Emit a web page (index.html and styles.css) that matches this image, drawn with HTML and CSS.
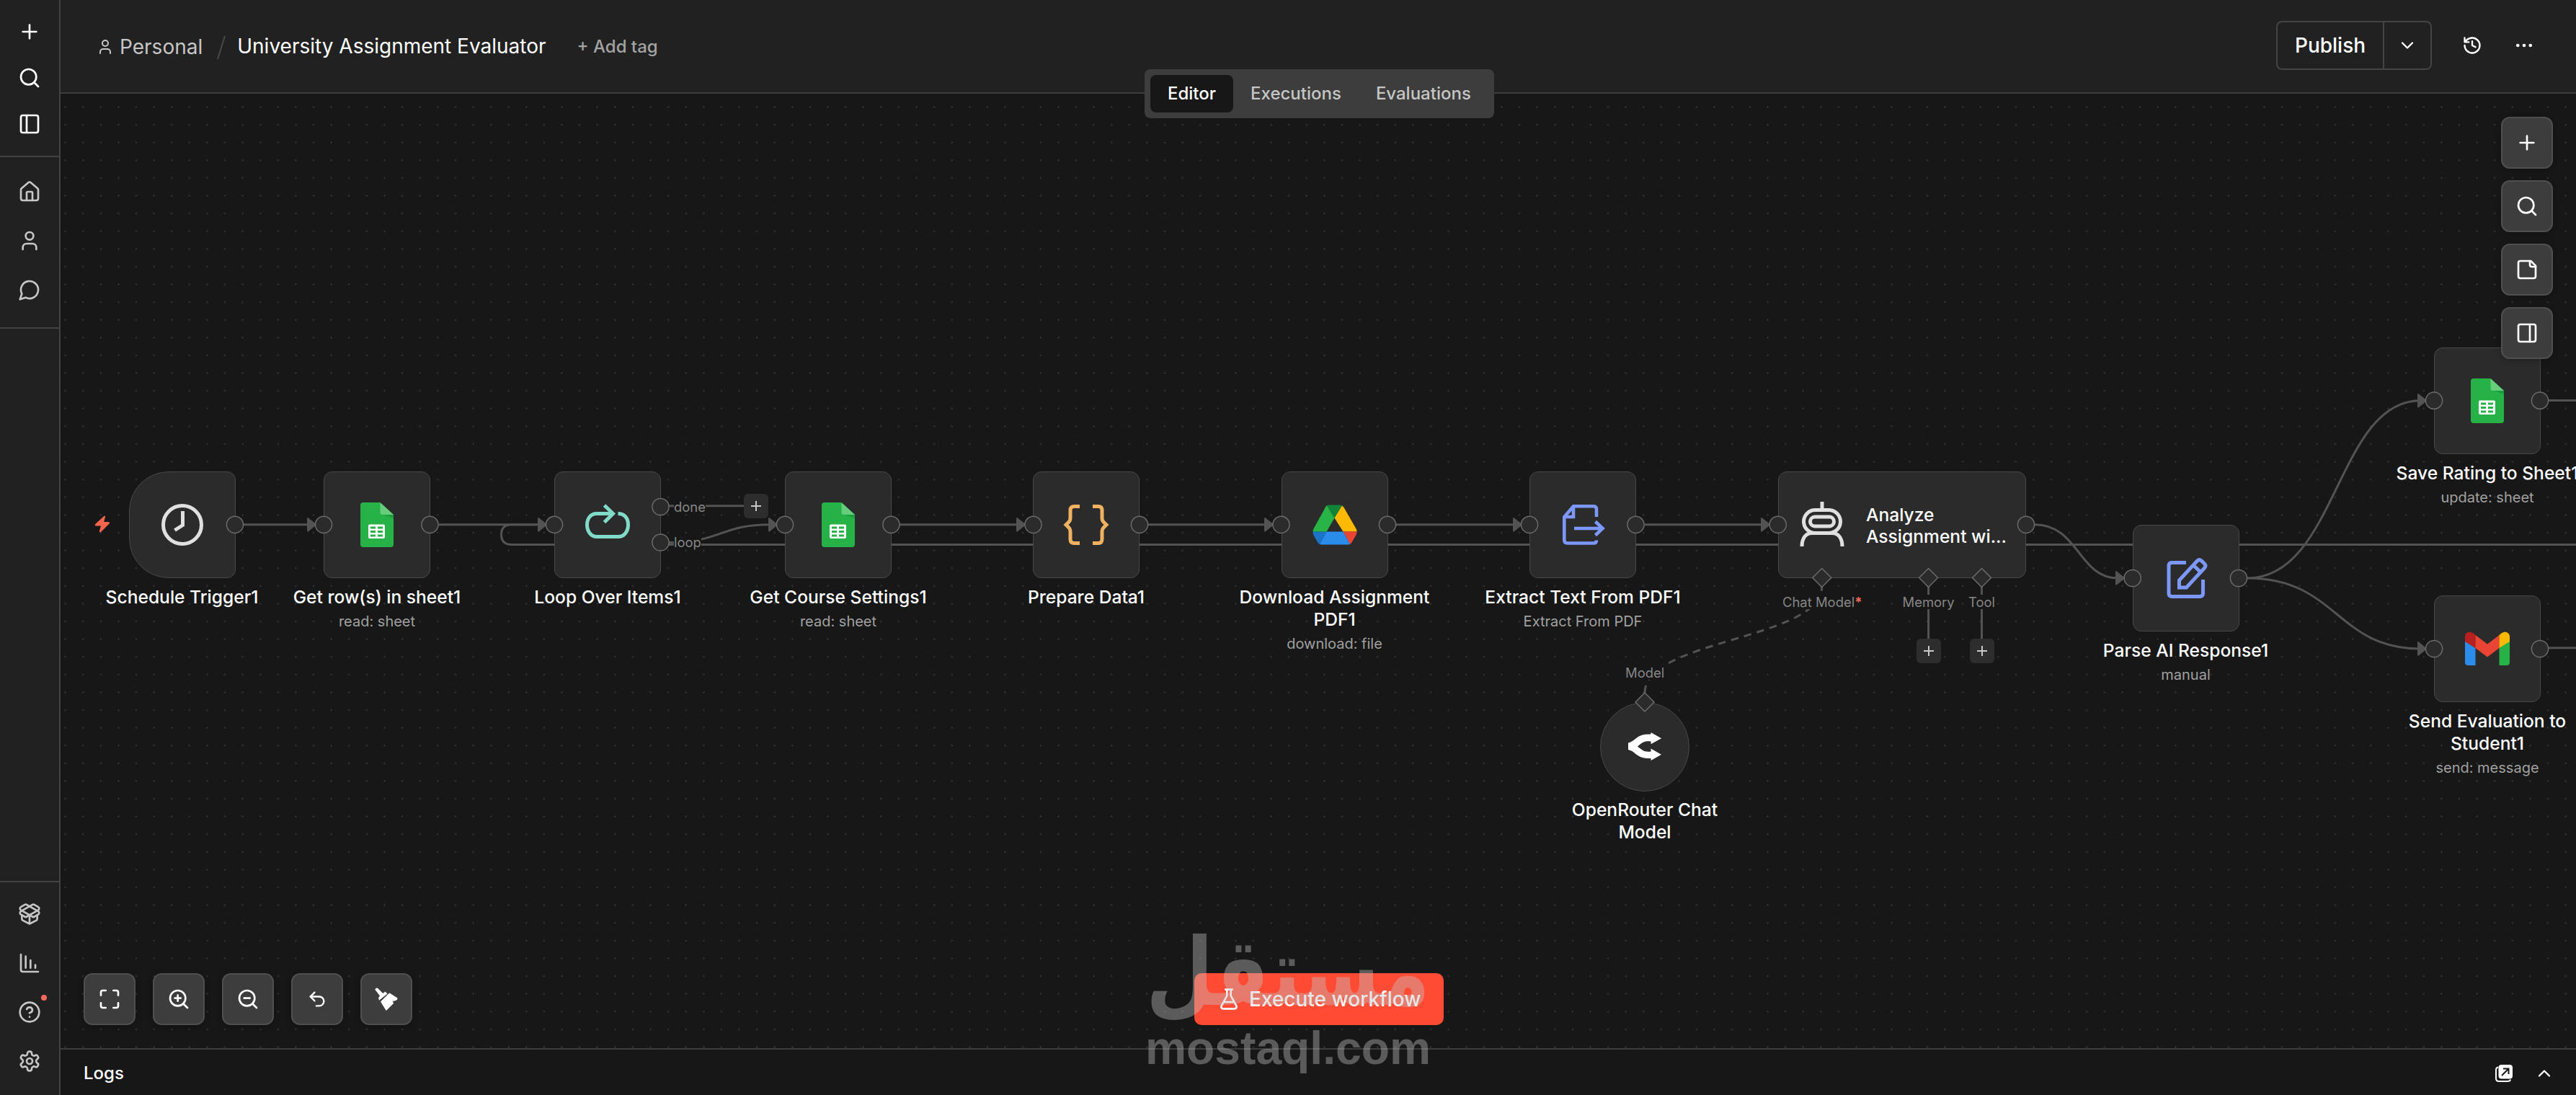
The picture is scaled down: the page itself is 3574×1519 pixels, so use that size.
FILE: index.html
```html
<!DOCTYPE html>
<html lang="en">
<head>
<meta charset="utf-8">
<title>University Assignment Evaluator</title>
<link rel="stylesheet" href="styles.css">
</head>
<body>
<svg class="defs" aria-hidden="true">
  <symbol id="plus" viewBox="0 0 24 24"><path d="M5 12h14M12 5v14"/></symbol>
  <symbol id="search" viewBox="0 0 24 24"><circle cx="11" cy="11" r="8"/><path d="m21 21-4.3-4.3"/></symbol>
  <symbol id="panel-left" viewBox="0 0 24 24"><rect x="3" y="3" width="18" height="18" rx="2"/><path d="M9 3v18"/></symbol>
  <symbol id="panel-right" viewBox="0 0 24 24"><rect x="3" y="3" width="18" height="18" rx="2"/><path d="M15 3v18"/></symbol>
  <symbol id="home" viewBox="0 0 24 24"><path d="M15 21v-8a1 1 0 0 0-1-1h-4a1 1 0 0 0-1 1v8"/><path d="M3 10a2 2 0 0 1 .709-1.528l7-5.999a2 2 0 0 1 2.582 0l7 5.999A2 2 0 0 1 21 10v9a2 2 0 0 1-2 2H5a2 2 0 0 1-2-2z"/></symbol>
  <symbol id="user" viewBox="0 0 24 24"><path d="M19 21v-2a4 4 0 0 0-4-4H9a4 4 0 0 0-4 4v2"/><circle cx="12" cy="7" r="4"/></symbol>
  <symbol id="chat" viewBox="0 0 24 24"><path d="M7.9 20A9 9 0 1 0 4 16.1L2 22Z"/></symbol>
  <symbol id="package" viewBox="0 0 24 24"><path d="M12 22v-9"/><path d="M15.17 2.21a1.67 1.67 0 0 1 1.63 0L21 4.57a1.93 1.93 0 0 1 0 3.36L8.82 14.79a1.655 1.655 0 0 1-1.64 0L3 12.43a1.93 1.93 0 0 1 0-3.36z"/><path d="M20 13v3.87a2.06 2.06 0 0 1-1.11 1.83l-6 3.08a1.93 1.93 0 0 1-1.78 0l-6-3.08A2.06 2.06 0 0 1 4 16.87V13"/><path d="M21 12.43a1.93 1.93 0 0 0 0-3.36L8.83 2.2a1.64 1.64 0 0 0-1.63 0L3 4.57a1.93 1.93 0 0 0 0 3.36l12.18 6.86a1.636 1.636 0 0 0 1.63 0z"/></symbol>
  <symbol id="chart" viewBox="0 0 24 24"><path d="M3 3v16a2 2 0 0 0 2 2h16M8 17V5M13 17V9M18 17v-3"/></symbol>
  <symbol id="help" viewBox="0 0 24 24"><circle cx="12" cy="12" r="10"/><path d="M9.09 9a3 3 0 0 1 5.83 1c0 2-3 3-3 3M12 17h.01"/></symbol>
  <symbol id="gear" viewBox="0 0 24 24"><path d="M12.22 2h-.44a2 2 0 0 0-2 2v.18a2 2 0 0 1-1 1.73l-.43.25a2 2 0 0 1-2 0l-.15-.08a2 2 0 0 0-2.73.73l-.22.38a2 2 0 0 0 .73 2.73l.15.1a2 2 0 0 1 1 1.72v.51a2 2 0 0 1-1 1.74l-.15.09a2 2 0 0 0-.73 2.73l.22.38a2 2 0 0 0 2.73.73l.15-.08a2 2 0 0 1 2 0l.43.25a2 2 0 0 1 1 1.73V20a2 2 0 0 0 2 2h.44a2 2 0 0 0 2-2v-.18a2 2 0 0 1 1-1.73l.43-.25a2 2 0 0 1 2 0l.15.08a2 2 0 0 0 2.73-.73l.22-.39a2 2 0 0 0-.73-2.73l-.15-.08a2 2 0 0 1-1-1.74v-.5a2 2 0 0 1 1-1.74l.15-.09a2 2 0 0 0 .73-2.73l-.22-.38a2 2 0 0 0-2.73-.73l-.15.08a2 2 0 0 1-2 0l-.43-.25a2 2 0 0 1-1-1.73V4a2 2 0 0 0-2-2z"/><circle cx="12" cy="12" r="3"/></symbol>
  <symbol id="down" viewBox="0 0 24 24"><path d="m6 9 6 6 6-6"/></symbol>
  <symbol id="up" viewBox="0 0 24 24"><path d="m18 15-6-6-6 6"/></symbol>
  <symbol id="history" viewBox="0 0 24 24"><path d="M3 12a9 9 0 1 0 9-9 9.75 9.75 0 0 0-6.74 2.74L3 8M3 3v5h5M12 7v5l4 2"/></symbol>
  <symbol id="dots" viewBox="0 0 24 24"><circle cx="12" cy="12" r="1"/><circle cx="19.500" cy="12" r="1"/><circle cx="4.500" cy="12" r="1"/></symbol>
  <symbol id="note" viewBox="0 0 24 24"><path d="M16 3H5a2 2 0 0 0-2 2v14a2 2 0 0 0 2 2h14a2 2 0 0 0 2-2V8z"/><path d="M15 3v4a2 2 0 0 0 2 2h4"/></symbol>
  <symbol id="fit" viewBox="0 0 24 24"><path d="M8 3H5a2 2 0 0 0-2 2v3M21 8V5a2 2 0 0 0-2-2h-3M3 16v3a2 2 0 0 0 2 2h3M16 21h3a2 2 0 0 0 2-2v-3"/></symbol>
  <symbol id="zoom-in" viewBox="0 0 24 24"><circle cx="11" cy="11" r="8"/><path d="m21 21-4.350-4.350M11 8v6M8 11h6"/></symbol>
  <symbol id="zoom-out" viewBox="0 0 24 24"><circle cx="11" cy="11" r="8"/><path d="m21 21-4.350-4.350M8 11h6"/></symbol>
  <symbol id="undo" viewBox="0 0 24 24"><path d="M9 14 4 9l5-5"/><path d="M4 9h10.500a5.500 5.500 0 0 1 0 11H11"/></symbol>
  <symbol id="flask" viewBox="0 0 24 24"><path d="M14 2v6a2 2 0 0 0 .245.960l5.510 10.080A2 2 0 0 1 18 22H6a2 2 0 0 1-1.755-2.960l5.510-10.080A2 2 0 0 0 10 8V2M6.453 15h11.094M8.500 2h7"/></symbol>
  <symbol id="sheets" viewBox="0 0 46 62">
    <path fill="#26b247" d="M4 0H27L46 17V58a4 4 0 0 1-4 4H4a4 4 0 0 1-4-4V4a4 4 0 0 1 4-4Z"/>
    <path fill="#65cd7b" d="M27.500 0 46 17H31a3.500 3.500 0 0 1-3.500-3.500Z"/>
    <path fill="#1b9d3c" d="M32 17H46V22Z"/>
    <path fill="#fff" fill-rule="evenodd" d="M13 30.500H32a2 2 0 0 1 2 2V48a2 2 0 0 1-2 2H13a2 2 0 0 1-2-2V32.500a2 2 0 0 1 2-2ZM14 33.500V36.500H21V33.500ZM24 33.500V36.500H31V33.500ZM14 39V42H21V39ZM24 39V42H31V39ZM14 44.500V47.500H21V44.500ZM24 44.500V47.500H31V44.500Z"/>
  </symbol>
  <symbol id="sprout" viewBox="0 0 24 24"></symbol>
</svg>

<div class="app">
  <nav class="sidebar">
    <div class="side-group side-top">
      <svg class="ic bright"><use href="#plus"/></svg>
      <svg class="ic bright"><use href="#search"/></svg>
      <svg class="ic bright"><use href="#panel-left"/></svg>
    </div>
    <div class="side-group side-mid">
      <svg class="ic"><use href="#home"/></svg>
      <svg class="ic"><use href="#user"/></svg>
      <svg class="ic"><use href="#chat"/></svg>
    </div>
    <div class="side-group side-bottom">
      <svg class="ic"><use href="#package"/></svg>
      <svg class="ic"><use href="#chart"/></svg>
      <div class="help"><svg class="ic"><use href="#help"/></svg><span class="badge"></span></div>
      <svg class="ic"><use href="#gear"/></svg>
    </div>
  </nav>

  <main class="main">
    <header class="header">
      <div class="crumbs">
        <svg class="ic ic-user"><use href="#user"/></svg>
        <span class="owner">Personal</span>
        <svg class="slash" viewBox="0 0 12 34"><path d="M11 1 1 33"/></svg>
        <span class="title">University Assignment Evaluator</span>
        <span class="add-tag">+ Add tag</span>
      </div>
      <div class="actions">
        <div class="publish"><span class="publish-main">Publish</span><span class="publish-more"><svg class="ic ic-28"><use href="#down"/></svg></span></div>
        <svg class="ic ic-28 bright history"><use href="#history"/></svg>
        <svg class="ic ic-28 bright"><use href="#dots"/></svg>
      </div>
      <div class="tabs"><span class="tab active">Editor</span><span class="tab">Executions</span><span class="tab">Evaluations</span></div>
    </header>

    <section class="canvas">
      <div class="world">
        <svg class="layer" viewBox="0 0 3574 1519">
          <defs>
            <pattern id="grid" x="78.300" y="136.200" width="24.603" height="24.603" patternUnits="userSpaceOnUse"><circle cx="12.300" cy="12.300" r="1.050" fill="#424242"/></pattern>
          </defs>
          <rect x="84" y="130" width="3490" height="1324" fill="url(#grid)"/>
          <g class="edges">
            <path d="M338 727.800H428M609 727.800H748M1248 727.800H1412M1593 727.800H1756M1937 727.800H2101M2282 727.800H2445"/>
            <path d="M3574 755.500H710Q695.500 755.500 695.500 741.600T710 727.800H748"/>
            <path d="M928 701.700H1033M928 752.500C1000 752.500 1000 727.800 1068 727.800"/>
            <path d="M2823 727.800C2884 727.800 2884 802 2938 802"/>
            <path d="M3118 802C3242 802 3242 555.700 3358 555.700M3118 802C3242 802 3242 900 3358 900"/>
            <path d="M3536 555.400H3574M3536 898.800H3574M2675.600 814V887M2749.500 814V887"/>
            <path class="dashed" d="M2282 961C2282 887 2527.700 887 2527.700 814"/>
          </g>
          <g class="arrows">
            <path d="M427 719 438 727.800 427 736.600Z"/><path d="M747 719 758 727.800 747 736.600Z"/>
            <path d="M1067 719 1078 727.800 1067 736.600Z"/><path d="M1411 719 1422 727.800 1411 736.600Z"/>
            <path d="M1755 719 1766 727.800 1755 736.600Z"/><path d="M2100 719 2111 727.800 2100 736.600Z"/>
            <path d="M2444 719 2455 727.800 2444 736.600Z"/><path d="M2936 793 2947 802 2936 810.600Z"/>
            <path d="M3355 547 3366 555.700 3355 564.500Z"/><path d="M3355 891 3366 900 3355 908.600Z"/>
          </g>
        </svg>

        <svg class="bolt" viewBox="0 0 22 24"><path d="M13.500.8Q15.500.2 15 2.200L13.200 9H19.500Q22 9.400 20.500 11.600L9 23Q6.500 24.200 7 21.600L9 14.500H2Q-.2 14 1.200 12Z"/></svg>

        <div class="node schedule">
          <div class="box trigger"><svg class="ni" viewBox="0 0 62 62"><g fill="none" stroke="#e0e0e0" stroke-width="5"><circle cx="31" cy="31" r="26.500"/><path d="M31.500 12V31.500L20.500 38.500"/></g></svg></div>
          <div class="name">Schedule Trigger1</div>
        </div>
        <div class="node rows">
          <div class="box"><svg class="sheet"><use href="#sheets"/></svg></div>
          <div class="name">Get row(s) in sheet1</div><div class="sub">read: sheet</div>
        </div>
        <div class="node loop">
          <div class="box"><svg class="ni" viewBox="0 0 62 62"><g fill="none" stroke="#80dbc8" stroke-width="5"><path d="M38 15.500H15.500C7.500 15.500 2.500 22.500 2.500 31S7.500 47.500 16 47.500H46C54.500 47.500 59.500 39.500 59.500 31 59.500 21.500 54 15.500 45.500 15.500"/><path d="M26.500 4 38.500 15.500 26.500 27.500"/></g></svg></div>
          <div class="name">Loop Over Items1</div>
        </div>
        <div class="node course">
          <div class="box"><svg class="sheet"><use href="#sheets"/></svg></div>
          <div class="name">Get Course Settings1</div><div class="sub">read: sheet</div>
        </div>
        <div class="node prepare">
          <div class="box"><svg class="ni ni-wide" viewBox="0 0 64 62"><g fill="none" stroke="#f0b161" stroke-width="5"><path d="M23 5.500H15.500Q10 5.500 10 11V22Q10 25 8 27L4 31 8 35Q10 37 10 40V51Q10 56.500 15.500 56.500H23M41 5.500H48.500Q54 5.500 54 11V22Q54 25 56 27L60 31 56 35Q54 37 54 40V51Q54 56.500 48.500 56.500H41"/></g></svg></div>
          <div class="name">Prepare Data1</div>
        </div>
        <div class="node drive">
          <div class="box"><svg class="ni" viewBox="0 0 62 62">
            <path fill="#1a73c9" d="M.5 40.500H19.500L10 58Q8 57 7 55L1.500 45.500Q.5 43.500.5 40.500Z"/>
            <path fill="#28b446" d="M20 4 30.500 21.500 19.500 40.500H.5Q.5 38.500 1.500 36.500L17.500 7.500Q18.500 5 20 4Z"/>
            <path fill="#118537" d="M20 4Q22 3.500 24 3.500H37Q39.500 3.500 41 4.500L30.500 21.500Z"/>
            <path fill="#ffba00" d="M41 4.500Q42.500 5.500 43.500 7L60.500 36.500Q61.500 38.500 61.500 40.500H42.500L30.500 21.500Z"/>
            <path fill="#ea4435" d="M42.500 40.500H61.500Q61.500 43 60.500 45L55 54.500Q54 56.500 52 58Z"/>
            <path fill="#2b8deb" d="M19.500 40.500H42.500L52 58Q50 58.500 48 58.500H14Q12 58.500 10 58Z"/>
          </svg></div>
          <div class="name">Download Assignment<br>PDF1</div><div class="sub">download: file</div>
        </div>
        <div class="node extract">
          <div class="box"><svg class="ni" viewBox="0 0 62 62"><g fill="none" stroke="#7d98fb" stroke-width="4.600"><path d="M50 20V9.500Q50 5.300 46 5.300H18L5.300 20V52Q5.300 56.500 9.500 56.500H46Q50 56.500 50 52.500M5.300 20H18V5.300M19 36H58M48.500 26.500 58.500 36 48.500 45.500"/></g></svg></div>
          <div class="name">Extract Text From PDF1</div><div class="sub">Extract From PDF</div>
        </div>
        <div class="node analyze">
          <div class="box agent">
            <svg class="robot" viewBox="0 0 62 62"><g fill="none" stroke="#e0e0e0" stroke-width="5"><path d="M31 0V11"/><rect x="5.500" y="11.500" width="51" height="32" rx="16"/><rect x="14.500" y="21" width="33" height="13" rx="6.500"/><path d="M3 62C3 51 8 43.500 17 43.500H45C54 43.500 59 51 59 62"/></g></svg>
            <span class="agent-name">Analyze<br>Assignment wi...</span>
          </div>
        </div>
        <div class="node parse">
          <div class="box"><svg class="ni" viewBox="0 0 62 62"><g fill="none" stroke="#7d98fb" stroke-width="5" stroke-linejoin="round"><path d="M31 9.500H11.500Q7 9.500 7 14V52Q7 56.500 11.500 56.500H50Q54.500 56.500 54.500 52V33"/><path stroke-linejoin="miter" d="M21.500 44V34L46.500 7Q49.500 4.200 52.500 7L56.500 11Q59.500 14 56.500 17L31.500 44ZM41 13 51.500 23"/></g></svg></div>
          <div class="name">Parse AI Response1</div><div class="sub">manual</div>
        </div>
        <div class="node save">
          <div class="box"><svg class="sheet"><use href="#sheets"/></svg></div>
          <div class="name">Save Rating to Sheet1</div><div class="sub">update: sheet</div>
        </div>
        <div class="node send">
          <div class="box"><svg class="ni" viewBox="0 0 62 62">
            <path fill="#2b8deb" d="M0 20 14.500 30V54H4.500Q0 54 0 49.500Z"/>
            <path fill="#26b247" d="M47.500 30 62 20V49.500Q62 54 57.500 54H47.500Z"/>
            <path fill="#b7201f" d="M0 20V14.500C0 7.500 7 6 11.500 9.500L14.500 12V30L0 21Z"/>
            <path fill="#ea4435" d="M14.500 12 31 24.500 47.500 12V30L31 42.500 14.500 30Z"/>
            <path fill="#ffba00" d="M47.500 12 50.500 9.500C55 6 62 7.500 62 14.500V21L47.500 30Z"/>
          </svg></div>
          <div class="name">Send Evaluation to<br>Student1</div><div class="sub">send: message</div>
        </div>
        <div class="node router">
          <div class="box round"><svg class="fork" viewBox="0 0 46 39"><path fill="#fff" d="M0 14.500C9 13 12 3.500 24 2.800L31.500 2.500V0L46 8.200 31.500 16.300V12.500C22 11.500 20 14 13 19.500 20 25 22 27.500 31.500 26.500V22.500L46 30.800 31.500 39V36L24 35.800C12 35 9 25.500 0 24Z"/></svg></div>
          <div class="name">OpenRouter Chat<br>Model</div>
        </div>

        <span class="wire-label l-done">done</span>
        <span class="wire-label l-loop">loop</span>
        <span class="wire-label l-chat">Chat Model<b>*</b></span>
        <span class="wire-label l-memory">Memory</span>
        <span class="wire-label l-tool">Tool</span>
        <span class="wire-label l-model">Model</span>
        <span class="adder a-done"><svg><use href="#plus"/></svg></span>
        <span class="adder a-memory"><svg><use href="#plus"/></svg></span>
        <span class="adder a-tool"><svg><use href="#plus"/></svg></span>

        <svg class="layer handles" viewBox="0 0 3574 1519">
          <circle cx="326" cy="727.800" r="11.600"/><circle cx="449" cy="727.800" r="11.600"/><circle cx="596.500" cy="727.800" r="11.600"/>
          <circle cx="769" cy="727.800" r="11.600"/><circle cx="916.500" cy="703" r="11.600"/><circle cx="916.500" cy="752.500" r="11.600"/>
          <circle cx="1089" cy="727.800" r="11.600"/><circle cx="1236.500" cy="727.800" r="11.600"/><circle cx="1433.500" cy="727.800" r="11.600"/>
          <circle cx="1581" cy="727.800" r="11.600"/><circle cx="1777.500" cy="727.800" r="11.600"/><circle cx="1925" cy="727.800" r="11.600"/>
          <circle cx="2122" cy="727.800" r="11.600"/><circle cx="2269.500" cy="727.800" r="11.600"/><circle cx="2466.700" cy="727.800" r="11.600"/>
          <circle cx="2811" cy="727.800" r="11.600"/><circle cx="2958.700" cy="802" r="11.600"/><circle cx="3106" cy="802" r="11.600"/>
          <circle cx="3377" cy="555.700" r="11.600"/><circle cx="3524" cy="555.700" r="11.600"/><circle cx="3377" cy="900" r="11.600"/><circle cx="3524" cy="900" r="11.600"/>
          <path d="M2527.700 788.500 2540.700 801.500 2527.700 814.500 2514.700 801.500ZM2675.600 788.500 2688.600 801.500 2675.600 814.500 2662.600 801.500ZM2749.500 788.500 2762.500 801.500 2749.500 814.500 2736.500 801.500ZM2282 961 2295 974 2282 987 2269 974Z"/>
        </svg>
      </div>

      <div class="tools-right">
        <span class="btn"><svg class="ic"><use href="#plus"/></svg></span>
        <span class="btn"><svg class="ic"><use href="#search"/></svg></span>
        <span class="btn"><svg class="ic"><use href="#note"/></svg></span>
        <span class="btn"><svg class="ic"><use href="#panel-right"/></svg></span>
      </div>
      <div class="tools-left">
        <span class="btn"><svg class="ic"><use href="#fit"/></svg></span>
        <span class="btn"><svg class="ic"><use href="#zoom-in"/></svg></span>
        <span class="btn"><svg class="ic"><use href="#zoom-out"/></svg></span>
        <span class="btn"><svg class="ic ic-28"><use href="#undo"/></svg></span>
        <span class="btn"><svg class="broom" viewBox="0 0 32 32"><path d="M.3 2.800Q1.500-.2 4 .8L11.300 8 14.500 5.500 17.500 8.500 6 17.800 5 14.300 7 11.500ZM18.500 9 20.500 7.500 31.500 14.500 31 17 26 19 24.500 18 26 22 15.800 32 8 19.500Z"/></svg></span>
      </div>
      <div class="execute"><svg class="ic"><use href="#flask"/></svg><span>Execute workflow</span></div>
    </section>

    <footer class="logs">
      <span>Logs</span>
      <div class="logs-actions">
        <svg class="popout" viewBox="0 0 24 24"><path fill="none" stroke="#fff" stroke-width="2" d="M4 3.500Q1 4 1 7V19Q1 23 5 23H17Q20.500 23 21 20.500"/><rect x="4.500" y="0" width="19.500" height="19.500" rx="4" fill="#fff"/><path fill="none" stroke="#181818" stroke-width="2" d="M9 15 18.500 5.500M11 5.500H18.500V13"/></svg>
        <svg class="ic ic-28 bright"><use href="#up"/></svg>
      </div>
    </footer>
  </main>

  <svg class="watermark" viewBox="0 0 420 220">
    <text class="wm-ar" x="404" y="104" textLength="394" lengthAdjust="spacingAndGlyphs" direction="rtl">مستقل</text>
    <text class="wm-en" x="9" y="186" textLength="396" lengthAdjust="spacingAndGlyphs">mostaql.com</text>
  </svg>
</div>
</body>
</html>
```
FILE: styles.css
```css
* { box-sizing: border-box; }
body { margin: 0; background: #171717; color: #fff; font-family: Inter, "Liberation Sans", sans-serif; overflow: hidden; }
.defs { position: absolute; width: 0; height: 0; }
.app { position: relative; display: flex; width: 3574px; height: 1519px; overflow: hidden; }

.ic { display: block; flex: none; width: 32px; height: 32px; fill: none; stroke: #c6c6c6; stroke-width: 2; stroke-linecap: round; stroke-linejoin: round; }
.ic-28 { width: 28px; height: 28px; }
.bright, .btn .ic, .publish .ic, .execute .ic { stroke: #fff; }

/* sidebar */
.sidebar { display: flex; flex-direction: column; flex: none; width: 84px; background: #212121; border-right: 2px solid #424242; }
.side-group { display: flex; flex-direction: column; align-items: center; }
.side-top { height: 218px; padding-top: 28px; gap: 32px; border-bottom: 2px solid #424242; }
.side-mid { height: 238px; padding-top: 32px; gap: 36px; border-bottom: 2px solid #424242; }
.side-bottom { margin-top: auto; height: 297px; padding-top: 28px; gap: 36px; border-top: 2px solid #424242; }
.help { position: relative; }
.badge { position: absolute; right: -8px; top: -8px; width: 8px; height: 8px; border-radius: 50%; background: #f5695a; }

/* header */
.main { display: flex; flex-direction: column; flex: 1; min-width: 0; }
.header { position: relative; z-index: 2; display: flex; justify-content: space-between; flex: none; height: 130px; padding: 0 58px 2px 50px; background: #212121; border-bottom: 2px solid #3d3d3d; }
.crumbs, .actions { display: flex; align-items: center; }
.ic-user { width: 24px; height: 24px; margin-top: 4px; }
.owner { margin-left: 8px; font-size: 28px; color: #c6c6c6; padding-top: 3px; }
.slash { width: 12px; height: 34px; margin: 6px 0 0 20px; fill: none; stroke: #484848; stroke-width: 2; }
.title { margin-left: 16px; font-size: 28px; padding-top: 2px; }
.add-tag { margin-left: 43px; padding-top: 2px; font-size: 24px; font-weight: 500; color: #a3a3a3; }
.publish { display: flex; height: 68px; border: 2px solid #444; border-radius: 8px; font-size: 28px; font-weight: 500; }
.publish-main { display: flex; align-items: center; justify-content: center; width: 146px; }
.publish-more { display: flex; align-items: center; justify-content: center; width: 66px; border-left: 2px solid #444; }
.history { margin: 0 44px 0 42px; }
.tabs { position: absolute; left: 1504px; top: 96px; display: flex; padding: 8px; border-radius: 8px; background: #3d3d3d; }
.tab { height: 52px; padding: 0 24px; line-height: 52px; font-size: 24px; font-weight: 500; color: #c6c6c6; border-radius: 8px; }
.tab.active { background: #171717; color: #fff; }

/* canvas */
.canvas { position: relative; flex: 1; overflow: hidden; background: #171717; }
.world { position: absolute; left: -84px; top: -130px; width: 3574px; height: 1519px; }
.layer { position: absolute; left: 0; top: 0; width: 3574px; height: 1519px; pointer-events: none; }
.edges { fill: none; stroke: #535353; stroke-width: 3; }
.dashed { stroke-dasharray: 10.500 8; }
.arrows { fill: #535353; stroke: #535353; stroke-width: 2; stroke-linejoin: round; }
.handles { fill: #2b2b2b; stroke: #6b6b6b; stroke-width: 1.5; }
.bolt { position: absolute; left: 131px; top: 715px; width: 22px; height: 24px; fill: #f5644f; }

.node { position: absolute; width: 148px; display: flex; flex-direction: column; align-items: center; }
.box { display: flex; align-items: center; justify-content: center; flex: none; width: 148px; height: 148px; border: 1.5px solid #484848; border-radius: 12px; background: #2b2b2b; }
.trigger { border-radius: 55px 12px 12px 55px; }
.round { width: 124px; height: 124px; border-radius: 50%; }
.name { margin-top: 10.800px; white-space: nowrap; text-align: center; font-size: 24.600px; line-height: 30.750px; font-weight: 500; }
.sub { margin-top: 6.300px; white-space: nowrap; font-size: 20px; line-height: 24.600px; color: #a0a0a0; }
.ni { width: 62px; height: 62px; }
.ni-wide { width: 64px; }
.sheet { width: 46px; height: 62px; }
.fork { width: 46px; height: 39px; }
.schedule { left: 178.500px; top: 654px; }
.rows { left: 449px; top: 654px; }
.loop { left: 769px; top: 654px; }
.course { left: 1089px; top: 654px; }
.prepare { left: 1433px; top: 654px; }
.drive { left: 1777.500px; top: 654px; }
.extract { left: 2122px; top: 654px; }
.analyze { left: 2467px; top: 654px; width: 344px; }
.parse { left: 2958.500px; top: 728px; }
.save { left: 3377px; top: 482px; }
.send { left: 3377px; top: 826px; }
.router { left: 2208px; top: 973.500px; }
.agent { width: 344px; justify-content: flex-start; padding: 0 0 3px 29px; gap: 30px; }
.robot { width: 62px; height: 62px; margin-bottom: 0; }
.agent-name { font-size: 24.600px; line-height: 30px; font-weight: 500; padding-top: 4px; }

.wire-label { position: absolute; font-size: 18.450px; line-height: 20px; color: #868686; background: #171717; white-space: nowrap; }
.wire-label b { color: #f5695a; }
.l-done { left: 935px; top: 693px; }
.l-loop { left: 935px; top: 742px; }
.l-chat { left: 2473px; top: 825px; }
.l-memory { left: 2639.500px; top: 825px; }
.l-tool { left: 2731px; top: 825px; }
.l-model { left: 2255px; top: 923px; }
.adder { position: absolute; display: flex; align-items: center; justify-content: center; width: 34px; height: 34px; border-radius: 6px; background: #2d2d2d; }
.adder svg { width: 24px; height: 24px; stroke: #c8c8c8; stroke-width: 2; fill: none; }
.a-done { left: 1032px; top: 685px; }
.a-memory { left: 2658.500px; top: 886px; }
.a-tool { left: 2732.500px; top: 886px; }

/* floating controls */
.btn { display: flex; align-items: center; justify-content: center; width: 72px; height: 72px; border: 2px solid #4f4f4f; border-radius: 12px; background: #3d3d3d; box-shadow: 0 2px 8px rgba(0, 0, 0, .25); }
.tools-right { position: absolute; right: 32px; top: 32px; display: flex; flex-direction: column; gap: 16px; }
.tools-left { position: absolute; left: 32px; bottom: 32px; display: flex; gap: 24px; }
.broom { width: 32px; height: 32px; fill: #fff; }
.execute { position: absolute; left: 1573px; bottom: 32px; width: 346px; height: 72px; display: flex; align-items: center; padding-left: 32px; gap: 12px; border-radius: 10px; background: #ff4b33; font-size: 28px; font-weight: 500; white-space: nowrap; }

/* logs bar */
.logs { display: flex; align-items: center; justify-content: space-between; flex: none; height: 65px; padding: 2px 30px 0 32px; border-top: 2px solid #3d3d3d; background: #171717; font-size: 24px; font-weight: 500; }
.logs-actions { display: flex; align-items: center; gap: 30px; }
.popout { width: 24px; height: 24px; }

/* watermark */
.watermark { position: absolute; z-index: 5; left: 1580px; top: 1290px; width: 420px; height: 220px; fill: #c1c1c1; opacity: .4; overflow: visible; pointer-events: none; }
.wm-ar { font: bold 130px "DejaVu Sans", sans-serif; }
.wm-en { font: bold 64px "Liberation Sans", sans-serif; }
```
